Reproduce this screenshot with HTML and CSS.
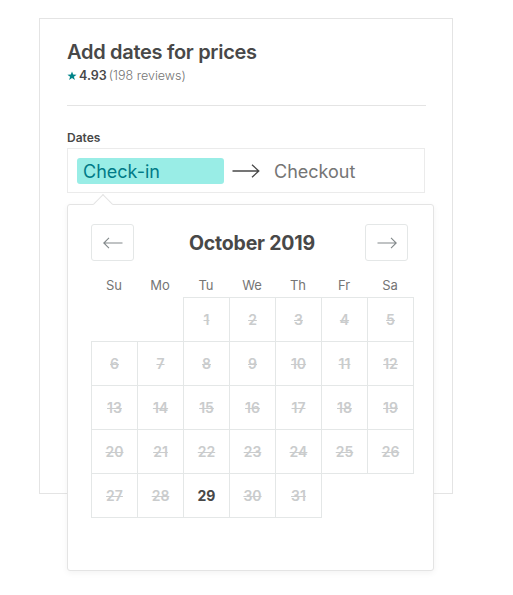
FILE: index.html
```html
<!DOCTYPE html>
<html lang="en">
<head>
<meta charset="utf-8">
<title>Add dates for prices</title>
<link rel="stylesheet" href="styles.css">
</head>
<body>
<div class="page">
  <section class="card">
    <h1 class="title">Add dates for prices</h1>
    <div class="rating">
      <svg class="star" viewBox="0 0 10 10" width="10" height="10"><path d="M5 0.4 L6.2 3.6 L9.6 3.7 L6.9 5.8 L7.9 9.1 L5 7.1 L2.1 9.1 L3.1 5.8 L0.4 3.7 L3.8 3.6 Z" fill="#008489"/></svg>
      <span class="score">4.93</span>
      <span class="count">(198 reviews)</span>
    </div>
    <div class="divider"></div>
    <div class="field">
      <div class="label">Dates</div>
      <div class="range">
        <div class="date date-active">Check-in</div>
        <svg class="range-arrow" viewBox="0 0 28 14" width="28" height="14"><path d="M0.5 7 H26.5 M20 0.8 L26.8 7 L20 13.2" fill="none" stroke="#484848" stroke-width="1.3"/></svg>
        <div class="date">Checkout</div>
      </div>
      <div class="popup">
        <div class="caret"></div>
        <div class="cal-head">
          <button class="nav"><svg viewBox="0 0 20 12" width="20" height="12"><path d="M19.5 6 H1 M6 0.8 L0.8 6 L6 11.2" fill="none" stroke="#82888a" stroke-width="1.1"/></svg></button>
          <div class="month">October 2019</div>
          <button class="nav"><svg viewBox="0 0 20 12" width="20" height="12"><path d="M0.5 6 H19 M14 0.8 L19.2 6 L14 11.2" fill="none" stroke="#82888a" stroke-width="1.1"/></svg></button>
        </div>
        <div class="weekdays">
          <span>Su</span><span>Mo</span><span>Tu</span><span>We</span><span>Th</span><span>Fr</span><span>Sa</span>
        </div>
        <div class="days">
          <div class="day empty"></div><div class="day empty"></div>
          <div class="day off">1</div><div class="day off">2</div><div class="day off">3</div><div class="day off">4</div><div class="day off">5</div>
          <div class="day off">6</div><div class="day off">7</div><div class="day off">8</div><div class="day off">9</div><div class="day off">10</div><div class="day off">11</div><div class="day off">12</div>
          <div class="day off">13</div><div class="day off">14</div><div class="day off">15</div><div class="day off">16</div><div class="day off">17</div><div class="day off">18</div><div class="day off">19</div>
          <div class="day off">20</div><div class="day off">21</div><div class="day off">22</div><div class="day off">23</div><div class="day off">24</div><div class="day off">25</div><div class="day off">26</div>
          <div class="day off">27</div><div class="day off">28</div><div class="day on">29</div><div class="day off">30</div><div class="day off">31</div>
        </div>
      </div>
    </div>
  </section>
</div>
</body>
</html>
```
FILE: styles.css
```css
* { box-sizing: border-box; }
html, body { margin: 0; padding: 0; background: #ffffff; }
body {
  font-family: Inter, "Noto Sans", "Liberation Sans", sans-serif;
  color: #484848;
}
.page {
  padding: 18px 0 0 39px;
  width: 513px;
  height: 595px;
  overflow: hidden;
}
.card {
  width: 414px;
  height: 476px;
  border: 1px solid #e4e4e4;
  padding: 21px 26px 0 27px;
}
.title {
  margin: 0;
  font-size: 20px;
  line-height: 24px;
  font-weight: 600;
  letter-spacing: -0.3px;
  color: #484848;
}
.rating {
  margin-top: 4px;
  height: 16px;
  display: flex;
  align-items: center;
  gap: 2px;
  font-size: 12.5px;
  line-height: 16px;
}
.star { display: block; margin-top: -1px; }
.score { font-weight: 600; color: #484848; }
.count { font-weight: 300; color: #757575; }
.divider {
  margin-top: 21px;
  height: 1px;
  background: #e4e4e4;
}
.field { position: relative; }
.label {
  margin-top: 24px;
  font-size: 12px;
  line-height: 16px;
  font-weight: 600;
  color: #484848;
}
.range {
  margin-top: 2px;
  width: 358px;
  height: 45px;
  border: 1px solid #ebebeb;
  padding: 9px 9px 0 9px;
  display: flex;
  align-items: flex-start;
}
.date {
  width: 147px;
  height: 26px;
  padding: 2px 6px 0 6px;
  font-size: 18px;
  line-height: 24px;
  font-weight: 400;
  color: #757575;
  border-radius: 3px;
}
.date-active {
  background: #99ede6;
  color: #007a87;
}
.range-arrow {
  display: block;
  margin: 6px 8px 0 8px;
  flex: none;
}
.popup {
  position: absolute;
  left: 0;
  top: 74px;
  width: 367px;
  background: #ffffff;
  border: 1px solid #e4e4e4;
  border-radius: 3px;
  box-shadow: 0 2px 6px rgba(0, 0, 0, 0.05);
  padding: 19px 20px 53px 23px;
}
.caret {
  position: absolute;
  left: 28px;
  top: -8px;
  width: 14px;
  height: 14px;
  background: #ffffff;
  border-top: 1px solid #e4e4e4;
  border-left: 1px solid #e4e4e4;
  transform: rotate(45deg);
}
.cal-head {
  width: 317px;
  height: 37px;
  display: flex;
  align-items: center;
}
.nav {
  width: 43px;
  height: 37px;
  padding: 0;
  margin: 0;
  border: 1px solid #e4e7e7;
  border-radius: 3px;
  background: #ffffff;
  display: flex;
  align-items: center;
  justify-content: center;
  flex: none;
}
.nav svg { display: block; }
.month {
  flex: 1;
  text-align: center;
  padding-left: 5px;
  font-size: 19.5px;
  line-height: 24px;
  font-weight: 700;
  letter-spacing: -0.2px;
  color: #484848;
}
.weekdays {
  margin-top: 16px;
  margin-bottom: 4px;
  display: grid;
  grid-template-columns: repeat(7, 46px);
  height: 16px;
}
.weekdays span {
  text-align: center;
  font-size: 13px;
  line-height: 16px;
  color: #757575;
}
.days {
  display: grid;
  grid-template-columns: repeat(7, 46px);
  grid-auto-rows: 44px;
}
.day {
  width: 47px;
  height: 45px;
  border: 1px solid #e4e7e7;
  display: flex;
  align-items: center;
  justify-content: center;
  font-size: 14px;
  font-weight: 600;
}
.day.empty { border-color: transparent; }
.day.off {
  color: #cacccd;
  text-decoration: line-through;
}
.day.on { color: #484848; font-weight: 700; }
```
